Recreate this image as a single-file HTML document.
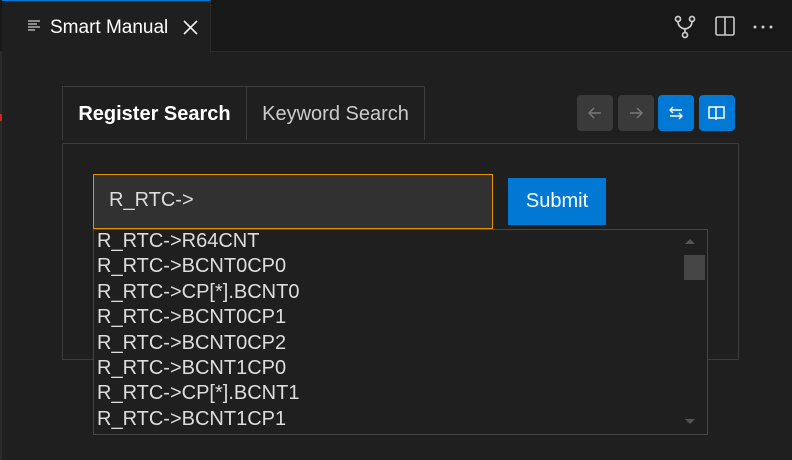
<!DOCTYPE html>
<html><head><style>
*{margin:0;padding:0;box-sizing:border-box}
body{width:792px;height:460px;background:#1f1f1f;font-family:"Liberation Sans",sans-serif;position:relative;overflow:hidden;color:#ccc}
.bar{position:absolute;left:0;top:0;width:792px;height:52px;background:#181818;border-bottom:1px solid #2b2b2b}
.tab{position:absolute;left:2px;top:0;width:209px;height:53px;background:#1f1f1f;border-top:1px solid #0078d4;border-right:1px solid #2b2b2b}
.abs{position:absolute}
.tabs div{position:absolute;top:86px;height:54px;border:1px solid #3c3c3c;border-bottom:none;font-size:20px;line-height:54px;text-align:center}
.panel{position:absolute;left:62px;top:143px;width:677px;height:217px;border:1px solid #3c3c3c}
.btn{position:absolute;top:95px;width:36px;height:36px;border-radius:4px}
.list{position:absolute;left:93px;top:229px;width:615px;height:206px;border:1px solid #454545;background:#1f1f1f;font-size:20px;color:#ddd;overflow:hidden}
.list div{height:25.4px;line-height:23px;padding-left:3px}
</style></head><body>
<div class="abs" style="left:0;top:0;width:2px;height:460px;background:#2b2b2b"></div>
<div class="abs" style="left:0;top:114px;width:2px;height:7px;background:#c42b1c"></div>
<div class="bar"></div>
<div class="tab"></div>
<svg class="abs" style="left:27px;top:19px" width="14" height="14"><g stroke="#ccc" stroke-width="1.3"><path d="M1 2h12M1 5h9M1 8h12M1 11h7"/></g></svg>
<div class="abs" style="left:50px;top:17px;font-size:19px;color:#fff">Smart Manual</div>
<svg class="abs" style="left:183px;top:20px" width="15" height="15"><path d="M1 1L14 14M14 1L1 14" stroke="#eee" stroke-width="1.6"/></svg>
<svg class="abs" style="left:674px;top:15px" width="22" height="24" fill="none" stroke="#ccc" stroke-width="1.7"><circle cx="4" cy="4" r="2.5"/><circle cx="18" cy="4" r="2.5"/><circle cx="11" cy="20" r="2.5"/><path d="M4 6.5q0 6 7 7.5q7-1.5 7-7.5M11 14v3.5"/></svg>
<svg class="abs" style="left:715px;top:16px" width="20" height="20" fill="none" stroke="#ccc" stroke-width="1.6"><rect x="1" y="1" width="18" height="18" rx="1.5"/><path d="M10 1v18"/></svg>
<svg class="abs" style="left:752px;top:24px" width="22" height="6" fill="#ccc"><circle cx="3" cy="3" r="1.5"/><circle cx="11" cy="3" r="1.5"/><circle cx="19" cy="3" r="1.5"/></svg>
<div class="tabs">
<div style="left:62px;width:185px;color:#fff;font-weight:bold">Register Search</div>
<div style="left:246px;width:179px;color:#ccc">Keyword Search</div>
</div>
<div class="btn" style="left:577px;background:#3a3a3a"><svg width="36" height="36" fill="none" stroke="#777" stroke-width="1.5"><path d="M24 18H12M17 13l-5 5 5 5"/></svg></div>
<div class="btn" style="left:618px;background:#3a3a3a"><svg width="36" height="36" fill="none" stroke="#777" stroke-width="1.5"><path d="M12 18h12M19 13l5 5-5 5"/></svg></div>
<div class="btn" style="left:658px;background:#0078d4"><svg width="36" height="36" fill="none" stroke="#fff" stroke-width="1.4"><path d="M24 15H12M15 12l-3 3 3 3M12 21h12M21 18l3 3-3 3"/></svg></div>
<div class="btn" style="left:699px;background:#0078d4"><svg width="36" height="36" fill="none" stroke="#fff" stroke-width="1.5"><path d="M10 12h7v11h-7zM17 12h8v11h-8zM17 23v2"/></svg></div>
<div class="panel"></div>
<div class="abs" style="left:93px;top:174px;width:400px;height:55px;border:1px solid #e59400;background:#313131;font-size:20px;color:#ddd;padding:14px 15px">R_RTC-&gt;</div>
<div class="abs" style="left:508px;top:178px;width:98px;height:47px;background:#0078d4;color:#fff;font-size:20px;text-align:center;line-height:46px">Submit</div>
<div class="list">
<div>R_RTC-&gt;R64CNT</div><div>R_RTC-&gt;BCNT0CP0</div><div>R_RTC-&gt;CP[*].BCNT0</div><div>R_RTC-&gt;BCNT0CP1</div><div>R_RTC-&gt;BCNT0CP2</div><div>R_RTC-&gt;BCNT1CP0</div><div>R_RTC-&gt;CP[*].BCNT1</div><div>R_RTC-&gt;BCNT1CP1</div>
<svg class="abs" style="left:589px;top:7px" width="14" height="190"><path d="M2 7L7 2L12 7Z" fill="#555"/><path d="M2 182L7 187L12 182Z" fill="#555"/></svg>
<div class="abs" style="left:590px;top:25px;width:21px;height:25px;background:#464646"></div>
</div>
</body></html>
